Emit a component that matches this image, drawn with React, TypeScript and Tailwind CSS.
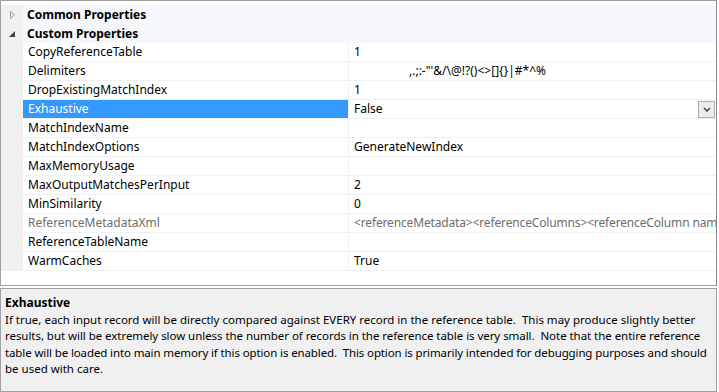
import React from "react";

type Row = { name: string; value: string; readOnly?: boolean; selected?: boolean; dropdown?: boolean; indent?: boolean };

const rows: Row[] = [
  { name: "CopyReferenceTable", value: "1" },
  { name: "Delimiters", value: ",.;:-\"'&/\\@!?()<>[]{}|#*^%", indent: true },
  { name: "DropExistingMatchIndex", value: "1" },
  { name: "Exhaustive", value: "False", selected: true, dropdown: true },
  { name: "MatchIndexName", value: "" },
  { name: "MatchIndexOptions", value: "GenerateNewIndex" },
  { name: "MaxMemoryUsage", value: "" },
  { name: "MaxOutputMatchesPerInput", value: "2" },
  { name: "MinSimilarity", value: "0" },
  { name: "ReferenceMetadataXml", value: "<referenceMetadata><referenceColumns><referenceColumn name=\"", readOnly: true },
  { name: "ReferenceTableName", value: "" },
  { name: "WarmCaches", value: "True" },
];

const font = { fontFamily: '"Noto Sans", "Open Sans", sans-serif' };

function Category({ label, open }: { label: string; open: boolean }) {
  return (
    <div className="flex h-[19px] bg-[#f5f7fa]">
      <div className="w-[22px] flex items-center justify-center bg-[#f0f0f0]">
        {open ? (
          <svg width="6" height="6" viewBox="0 0 6 6">
            <path d="M6 0 L6 6 L0 6 Z" fill="#404040" />
          </svg>
        ) : (
          <svg width="5" height="8" viewBox="0 0 5 8">
            <path d="M0.5 0.5 L4.5 4 L0.5 7.5 Z" fill="none" stroke="#a0a0a0" />
          </svg>
        )}
      </div>
      <div className="flex items-center pl-[4px] text-[12px] leading-[18px] font-bold text-black">{label}</div>
    </div>
  );
}

function PropRow({ row }: { row: Row }) {
  return (
    <div className="flex h-[19px] border-b border-[#f0f0f0] leading-[18px]">
      <div className="w-[22px] bg-[#f0f0f0]" />
      <div
        className={`w-[326px] flex items-center pl-[5px] border-r border-[#f0f0f0] whitespace-nowrap ${
          row.selected ? "bg-[#3399ff] text-white" : row.readOnly ? "text-[#6d6d6d]" : "text-black"
        }`}
      >
        {row.name}
      </div>
      <div
        className={`flex-1 min-w-0 flex items-center whitespace-nowrap ${row.indent ? "pl-[60px]" : "pl-[5px]"} ${
          row.readOnly ? "text-[#6d6d6d] tracking-[-0.15px]" : "text-black"
        }`}
      >
        <span className="flex-1 min-w-0 overflow-hidden">{row.value}</span>
        {row.dropdown && (
          <div className="w-[17px] h-[17px] mr-[1px] border border-[#acacac] bg-[#ececec] flex items-center justify-center">
            <svg width="8" height="5" viewBox="0 0 8 5">
              <path d="M1 1 L4 4 L7 1" fill="none" stroke="#404040" strokeWidth="1.5" />
            </svg>
          </div>
        )}
      </div>
    </div>
  );
}

export default function App() {
  return (
    <div className="w-[719px] h-[392px] bg-white flex flex-col text-[12px] leading-none" style={font}>
      {/* Property grid */}
      <div className="h-[286px] border border-[#a0a0a0] border-r-[#828790] mr-[2px] pt-[4px] bg-white overflow-hidden">
        <Category label="Common Properties" open={false} />
        <Category label="Custom Properties" open />
        {rows.map((r) => (
          <PropRow key={r.name} row={r} />
        ))}
      </div>

      {/* Description panel */}
      <div className="flex-1 mt-[2px] mr-[2px] border border-[#a0a0a0] bg-[#f0f0f0] px-[4px] pt-[5px] text-black whitespace-nowrap">
        <div className="font-bold text-[12px] leading-[17px]">Exhaustive</div>
        <div className="text-[11.5px] leading-[16.4px] mt-[1px]">
          <div>
            If true, each input record will be directly compared against EVERY record in the reference table.&nbsp; This
            may produce slightly better
          </div>
          <div className="tracking-[-0.05px]">
            results, but will be extremely slow unless the number of records in the reference table is very small.&nbsp;
            Note that the entire reference
          </div>
          <div className="tracking-[-0.12px]">
            table will be loaded into main memory if this option is enabled.&nbsp; This option is primarily intended for
            debugging purposes and should
          </div>
          <div>be used with care.</div>
        </div>
      </div>
    </div>
  );
}
